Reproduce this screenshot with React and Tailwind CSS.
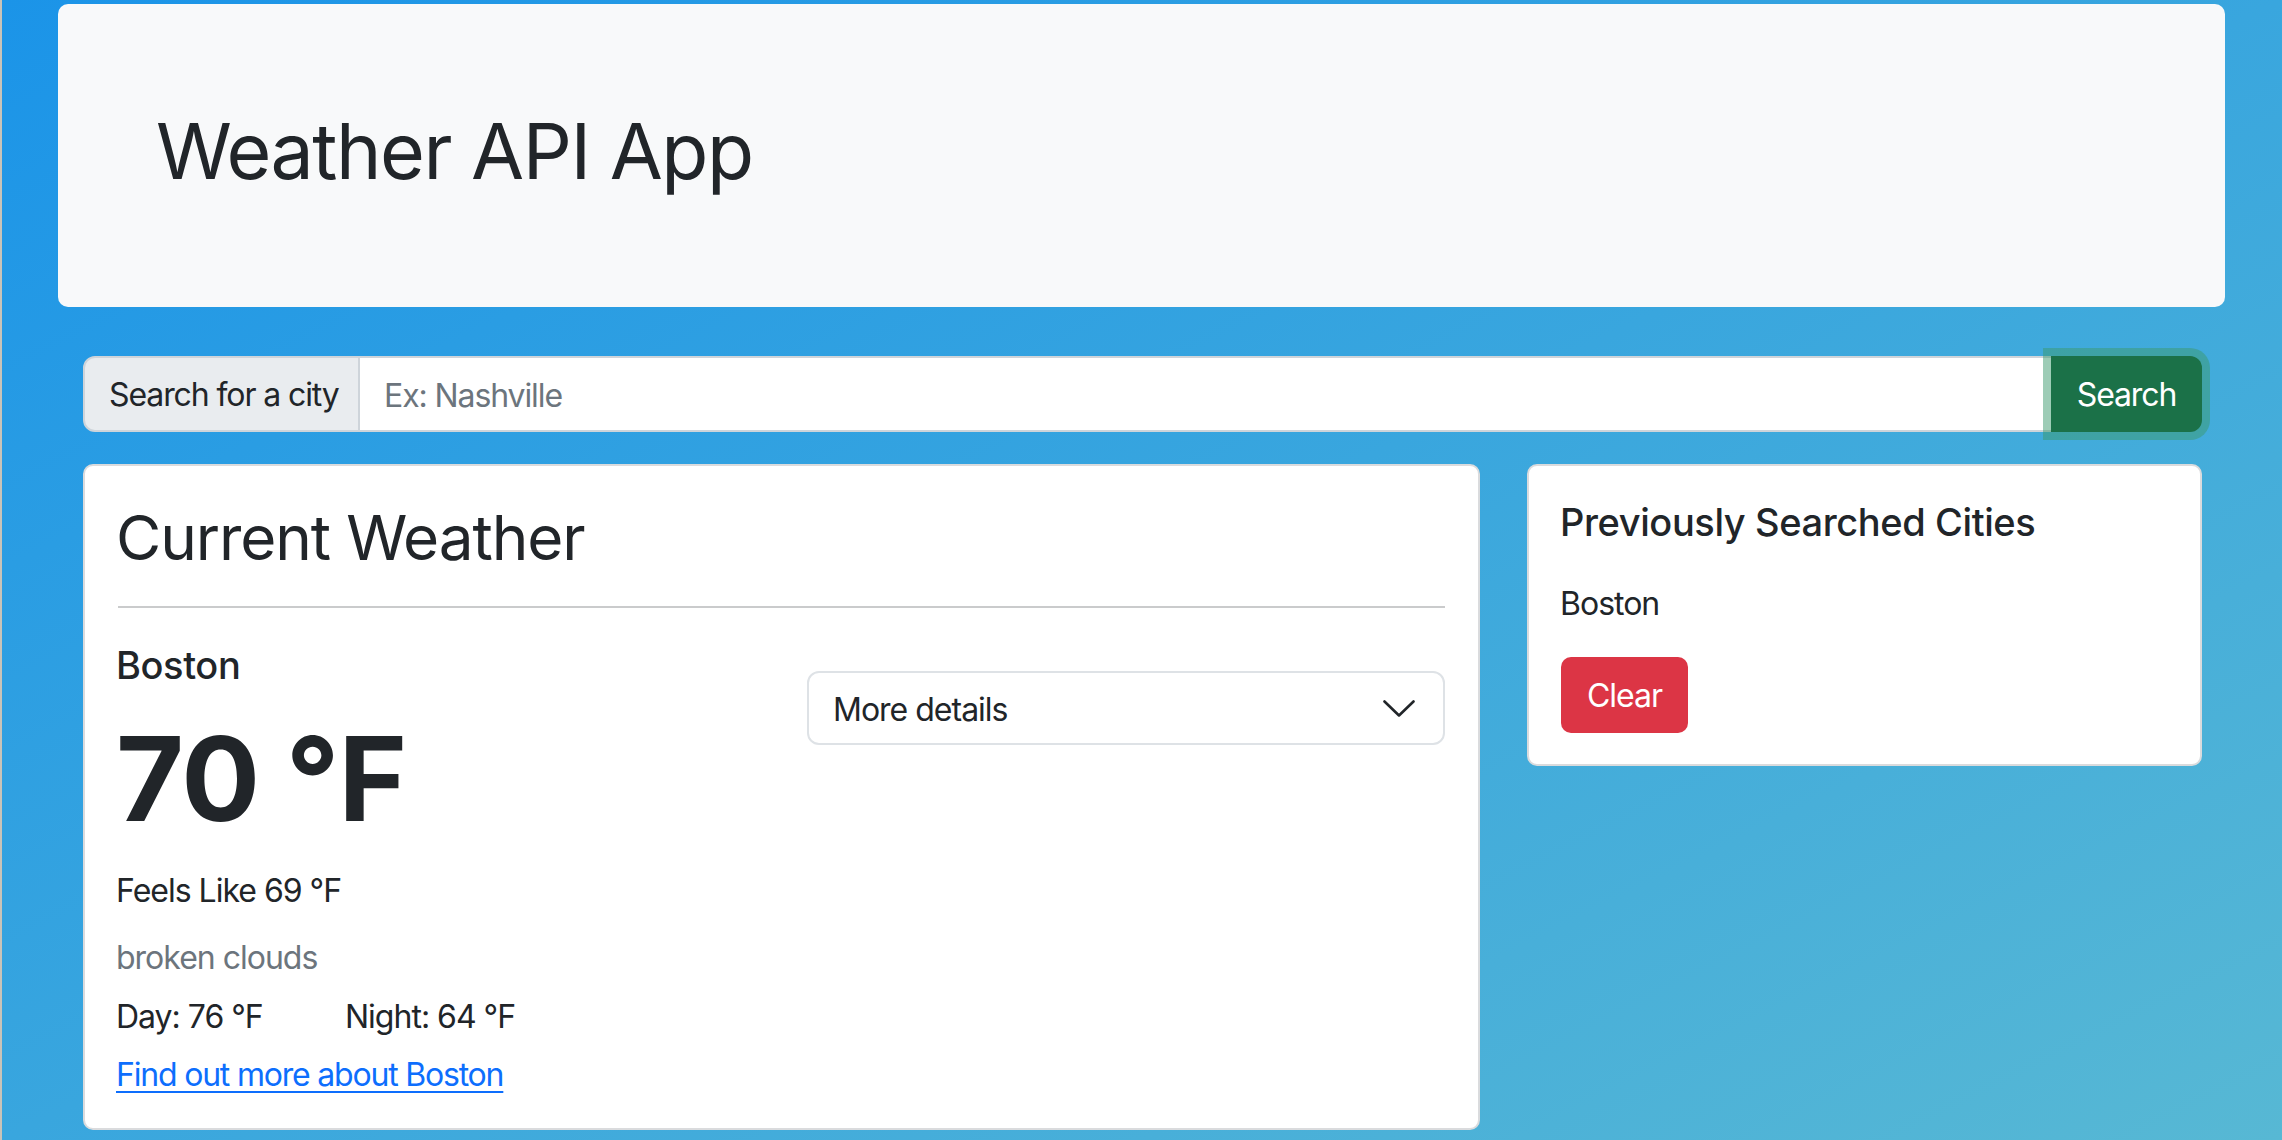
import React from 'react';

const font = { fontFamily: 'Inter, "Noto Sans", sans-serif' };

const Chevron = () => (
  <svg width="32" height="17" viewBox="0 0 32 17" fill="none" className="shrink-0">
    <polyline points="1.5,1.5 16,15.5 30.5,1.5" stroke="#212529" strokeWidth="2.6" strokeLinecap="round" strokeLinejoin="round" />
  </svg>
);

const App = () => {
  return (
    <div
      className="w-full h-[1140px] overflow-hidden border-l-2 border-[#c9c3b8] bg-[linear-gradient(to_bottom_right,#1b94e8,#57b8d4)] text-[#212529]"
      style={font}
    >
      <div className="ml-[56px] mr-[57px] pt-[4px]">
        {/* Jumbotron */}
        <div className="h-[303px] rounded-[10px] bg-[#f8f9fa] pl-[98px] pt-[101px]">
          <h1 className="text-[77px] leading-[1.2] font-normal tracking-[-1.5px]">Weather API App</h1>
        </div>

        <div className="pl-[25px] pr-[23px]">
          {/* Search bar */}
          <div className="mt-[49px] flex h-[76px] text-[32px] tracking-[-1.1px]">
            <span className="flex w-[277px] items-center rounded-l-[12px] border-2 border-[#ced4da] bg-[#e9ecef] pl-[24px] pt-[2px]">
              Search for a city
            </span>
            <input
              className="h-full flex-1 border-y-2 border-[#ced4da] bg-white pl-[24px] pt-[2px] text-[#212529] tracking-[-1.1px] outline-none placeholder:text-[#6c757d]"
              placeholder="Ex: Nashville"
              style={font}
            />
            <button className="relative z-10 h-full w-[151px] rounded-r-[12px] bg-[#1b7148] pt-[2px] text-white shadow-[0_0_0_8px_rgba(60,153,110,0.5)]">
              Search
            </button>
          </div>

          {/* Cards */}
          <div className="mt-[32px] flex items-start gap-[47px]">
            <div className="w-[1397px] rounded-[10px] border-2 border-[#dadbdd] bg-white pl-[31px] pr-[33px] pt-[35px] pb-[29px]">
              <h2 className="text-[62px] leading-[1.2] font-normal tracking-[-1.1px]">Current Weather</h2>
              <div className="mt-[31px] ml-[2px] h-[2px] bg-[#cacbcc]" />
              <div className="mt-[35px] flex">
                <div className="flex-1 text-[32px] leading-[1.5] tracking-[-1px]">
                  <h5 className="text-[38px] leading-[1.2] font-medium tracking-[-0.4px]">Boston</h5>
                  <div className="mt-[20px] text-[117px] leading-[1.2] font-bold tracking-[-1px]">70 °F</div>
                  <p className="mt-[18px]">Feels Like 69 °F</p>
                  <p className="mt-[19px] text-[#6c757d]">broken clouds</p>
                  <div className="mt-[11px] flex">
                    <span className="w-[229px]">Day: 76 °F</span>
                    <span>Night: 64 °F</span>
                  </div>
                  <a href="#" className="mt-[10px] block w-fit text-[#0d6efd] underline decoration-2 underline-offset-[5px] tracking-[-1.2px]">
                    Find out more about Boston
                  </a>
                </div>
                <div className="w-[638px] pt-[28px]">
                  <div className="flex h-[74px] items-center justify-between rounded-[12px] border-2 border-[#dee2e6] pl-[24px] pr-[28px] text-[32px] tracking-[-1px]">
                    <span className="pt-[3px]">More details</span>
                    <Chevron />
                  </div>
                </div>
              </div>
            </div>

            <div className="flex-1 rounded-[10px] border-2 border-[#dadbdd] bg-white pl-[31px] pr-[33px] pt-[34px] pb-[31px]">
              <h5 className="text-[38px] leading-[1.2] font-medium tracking-[-0.4px]">Previously Searched Cities</h5>
              <p className="mt-[34px] text-[32px] leading-[1.5] tracking-[-1px]">Boston</p>
              <button className="mt-[29px] ml-[1px] h-[76px] w-[127px] rounded-[10px] bg-[#dc3545] pt-[2px] text-[32px] text-white tracking-[-1px]">
                Clear
              </button>
            </div>
          </div>
        </div>
      </div>
    </div>
  );
};

export default App;
